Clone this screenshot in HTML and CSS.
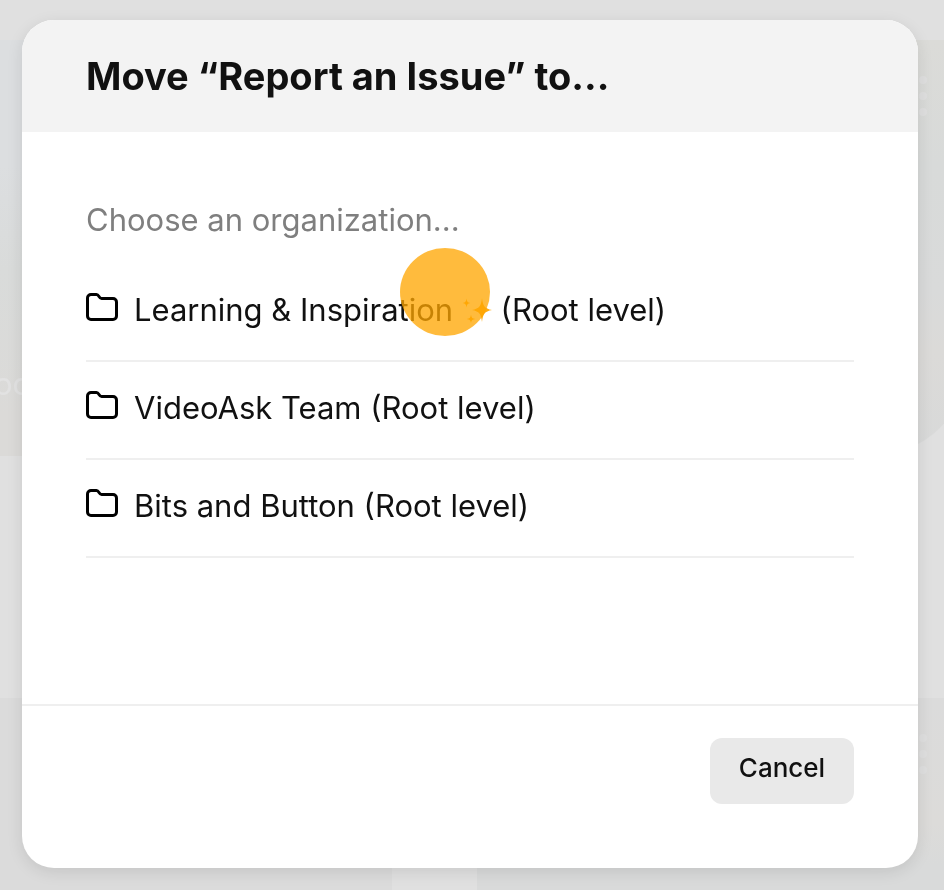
FILE: index.html
```html
<!DOCTYPE html>
<html lang="en">

<head>
    <meta charset="UTF-8">
    <meta name="viewport" content="width=device-width, initial-scale=1.0">
    <title>Move to...</title>
    <link rel="stylesheet" href="styles.css">
</head>

<body>
    <!-- dimmed card grid behind the dialog -->
    <div class="backdrop" aria-hidden="true">
        <div class="card card-photo"><span class="card-title">oo</span></div>
        <div class="card card-round"><span class="dots"><i></i><i></i><i></i></span></div>
        <div class="card"></div>
        <div class="card card-warm"><span class="dots"><i></i><i></i><i></i></span></div>
    </div>

    <svg class="sprite" aria-hidden="true">
        <symbol id="folder" viewBox="0 0 32 28">
            <path d="M5 1.500h5.500c2.500 0 2.500 4 5 4H27a3.500 3.500 0 0 1 3.500 3.500V23a3.500 3.500 0 0 1-3.500 3.500H5A3.500 3.500 0 0 1 1.500 23V5A3.500 3.500 0 0 1 5 1.500z" fill="none" stroke="#000" stroke-width="3" stroke-linejoin="round" />
        </symbol>
    </svg>

    <div class="modal" role="dialog" aria-labelledby="modalTitle">
        <header class="modal-header">
            <h1 id="modalTitle">Move “Report an Issue” to...</h1>
        </header>

        <main class="modal-body">
            <p class="hint">Choose an organization...</p>
            <ul class="org-list">
                <li>
                    <button type="button" class="org">
                        <svg class="folder"><use href="#folder" /></svg>
                        <span>Learning &amp; Inspiration
                            <span class="spark">
                                <svg class="sparkles" viewBox="0 0 30 28" fill="#ffac12">
                                    <path d="M20 3c1 8 2.500 10.500 10 12-7.500 1.500-9 4-10 12-1-8-2.500-10.500-10-12 7.500-1.500 9-4 10-12z" />
                                    <path d="M4.500 3.500c.5 3 1 4 4 4.500-3 .5-3.500 1.500-4 4.500-.5-3-1-4-4-4.500 3-.5 3.500-1.500 4-4.500z" />
                                    <path d="M9 19.500c.5 3 1 4 4.500 4.500-3.500.5-4 1.500-4.500 4-.5-2.500-1-3.500-4.500-4 3.500-.5 4-1.500 4.500-4.500z" />
                                </svg>
                                <span class="pointer"></span>
                            </span>
                            (Root level)</span>
                    </button>
                </li>
                <li>
                    <button type="button" class="org">
                        <svg class="folder"><use href="#folder" /></svg>
                        <span>VideoAsk Team (Root level)</span>
                    </button>
                </li>
                <li>
                    <button type="button" class="org">
                        <svg class="folder"><use href="#folder" /></svg>
                        <span>Bits and Button (Root level)</span>
                    </button>
                </li>
            </ul>
        </main>

        <footer class="modal-footer">
            <button type="button" class="cancel">Cancel</button>
        </footer>
    </div>
</body>

</html>
```
FILE: styles.css
```css
* {
    box-sizing: border-box;
}

body {
    margin: 0;
    padding: 20px 26px 22px 22px;
    min-height: 100vh;
    background-color: #e0e0e0;
    color: #111;
    font-family: Inter, "Liberation Sans", sans-serif;
}

.backdrop {
    position: fixed;
    inset: 0;
    display: grid;
    grid-template-columns: 392px 1fr;
    grid-template-rows: 416px 416px;
    gap: 242px 85px;
    padding-top: 40px;
    overflow: hidden;
}

.card {
    display: flex;
    background-color: #dbdbdb;
}

.card-photo {
    align-items: flex-end;
    padding-bottom: 54px;
    background: linear-gradient(#dcdee0 30%, #d9dbda 55%, #dbdad8 90%);
}

.card-title {
    margin-left: -6px;
    font-size: 31px;
    line-height: 36px;
    color: #e2e2e2;
}

.card-round {
    margin-right: -24px;
    border-radius: 0 0 96px 0;
    background: linear-gradient(#dbdbd8, #d8dad9 30%, #d9dada 60%, #dbdad8 75%, #d8d9d9);
}

.card-warm {
    margin-right: -24px;
    background: linear-gradient(#dbdbdb, #dcdbd9 30%, #d9dada 40%);
}

.dots {
    display: flex;
    flex-direction: column;
    gap: 8px;
    margin: 36px 41px 0 auto;
}

.dots i {
    width: 8px;
    height: 8px;
    border-radius: 50%;
    background-color: #dfdfdf;
}

.sprite {
    position: absolute;
    width: 0;
    height: 0;
}

.modal {
    position: relative;
    display: flex;
    flex-direction: column;
    min-height: calc(100vh - 42px);
    border-radius: 32px;
    background-color: #fff;
    box-shadow: 0 4px 16px rgba(0, 0, 0, 0.1);
}

.modal-header {
    padding: 32px 64px;
    border-radius: 32px 32px 0 0;
    background-color: #f3f3f3;
}

h1 {
    margin: 0;
    font-size: 38px;
    font-weight: 700;
    line-height: 48px;
}

.modal-body {
    flex: 1;
    padding: 68px 64px;
}

.hint {
    margin: 0 0 24px;
    font-size: 31px;
    line-height: 40px;
    color: #7f7f7f;
}

.org-list {
    margin: 0;
    padding: 0;
    list-style: none;
}

.org-list li {
    border-bottom: 2px solid #efefef;
}

.org {
    display: flex;
    align-items: center;
    gap: 16px;
    width: 100%;
    padding: 26px 0 30px;
    border: none;
    background: none;
    color: inherit;
    font-family: inherit;
    font-size: 31px;
    line-height: 40px;
    text-align: left;
    cursor: pointer;
}

.folder {
    flex: none;
    width: 32px;
    height: 28px;
    margin-bottom: 6px;
}

.spark {
    position: relative;
    display: inline-block;
}

.sparkles {
    width: 30px;
    height: 28px;
    vertical-align: -2px;
}

/* click highlight over the first row */
.pointer {
    position: absolute;
    right: 2px;
    bottom: -6px;
    width: 90px;
    height: 88px;
    border-radius: 50%;
    background-color: rgba(255, 165, 0, 0.76);
    pointer-events: none;
}

.modal-footer {
    display: flex;
    justify-content: flex-end;
    padding: 32px 64px 64px;
    border-top: 2px solid #efefef;
}

.cancel {
    min-width: 144px;
    padding: 12px 24px 18px;
    border: none;
    border-radius: 12px;
    background-color: #e9e9e9;
    color: #111;
    font-family: inherit;
    font-size: 26px;
    font-weight: 500;
    line-height: 36px;
    cursor: pointer;
}
```
